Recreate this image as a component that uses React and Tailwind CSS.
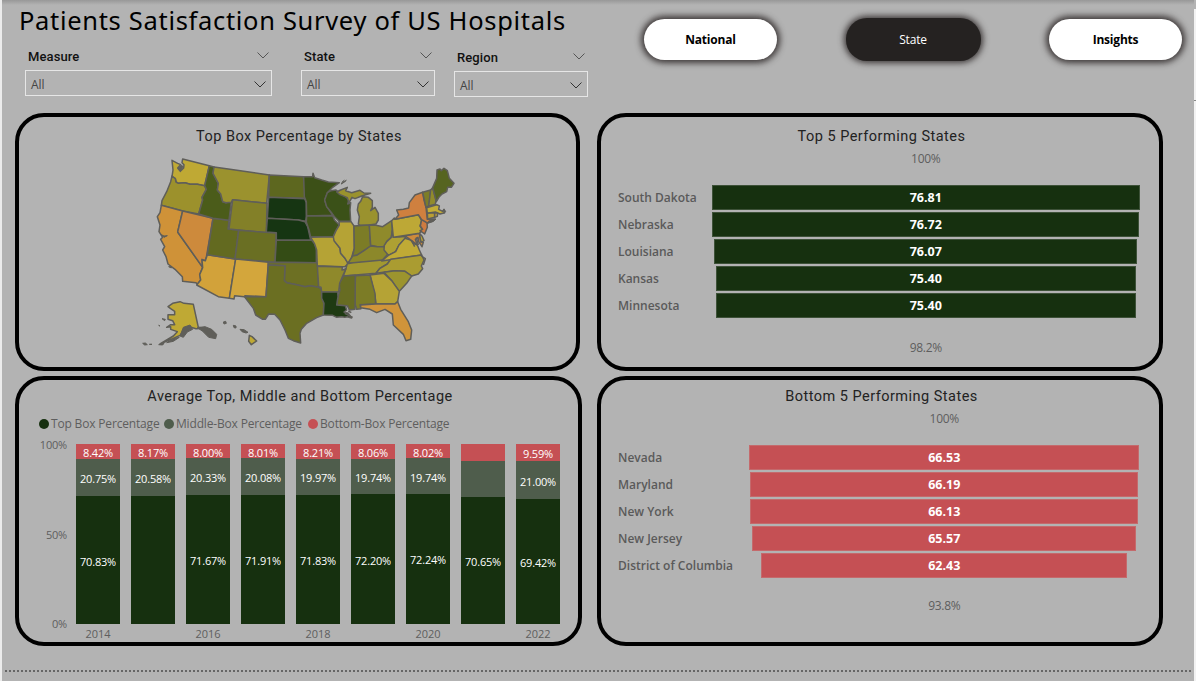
import React from "react";

const STATES = [
  ["WA", "#bfa934", "128,27 208,47 194,107 172,103 150,103 135,98 115,100 108,96 106,86 96,80 99,60 96,31 113,40 122,44 113,54 121,64 131,54 132,44 126,38"],
  ["OR", "#9c912c", "96,78 106,86 108,96 115,100 135,98 150,103 172,103 194,107 199,118 186,142 188,150 176,192 128,183 64,166 66,152 80,125 92,95"],
  ["CA", "#cf9238", "64,166 128,183 113,246 188,352 180,372 182,390 172,403 168,398 128,394 127,380 105,358 84,342 78,320 68,300 74,290 62,268 68,262 57,245 60,225 52,200 60,188"],
  ["NV", "#cd8a3c", "128,183 219,205 199,322 196,332 186,328 188,352 113,246"],
  ["AZ", "#d2a23a", "202,314 287,327 268,445 235,440 170,405 182,390 179,374 188,353 186,330 196,332"],
  ["UT", "#636a20", "219,205 267,211 264,237 296,241 285,327 202,314"],
  ["ID", "#4b5c1a", "208,47 222,51 219,70 235,100 232,120 242,132 248,155 258,158 274,153 267,211 219,205 176,192 188,150 186,142 199,118 194,107"],
  ["MT", "#9b922e", "222,51 270,58 388,75 380,160 278,149 274,157 258,158 248,155 242,132 232,120 235,100 219,70"],
  ["WY", "#838028", "278,149 381,160 379,248 267,237"],
  ["CO", "#6a6f23", "296,241 409,249 405,337 285,327"],
  ["NM", "#d3a63c", "287,327 385,337 378,440 315,437 313,440 284,437 282,447 268,445"],
  ["ND", "#5d671f", "388,75 490,80 493,105 497,145 386,142"],
  ["SD", "#163512", "386,142 494,146 499,158 499,200 497,214 475,210 382,205"],
  ["NE", "#163512", "382,205 475,210 495,215 503,230 512,270 409,271 409,248 379,246"],
  ["KS", "#344c15", "409,271 515,271 523,280 529,295 529,338 405,337"],
  ["OK", "#6d7023", "385,337 532,338 534,360 536,412 510,407 495,410 470,404 440,398 433,392 435,347 385,345"],
  ["TX", "#6b6f22", "385,345 435,347 433,392 440,398 470,404 495,410 510,407 536,412 545,418 545,440 552,460 550,495 530,503 500,520 484,538 480,550 482,579 460,572 445,565 435,540 420,510 404,493 386,492 376,508 368,508 347,495 340,475 313,440 378,440"],
  ["MN", "#3c5017", "491,80 518,80 519,70 524,83 545,90 565,96 598,98 578,112 562,128 554,150 560,168 578,196 500,198 499,155 493,140"],
  ["WI", "#3b5118", "562,128 573,122 588,120 600,130 615,138 627,150 623,162 632,158 630,180 632,214 597,214 585,202 576,190 560,170 554,150"],
  ["MI-UP", "#9a922e", "590,126 602,120 622,112 617,122 635,128 660,121 672,129 692,130 665,138 645,146 636,142 627,158 622,143 600,134"],
  ["MI", "#9a922e", "668,140 685,142 697,152 697,172 692,182 705,172 715,190 715,210 708,222 688,225 660,226 655,222 658,200 652,180 655,162 662,154"],
  ["IA", "#3f5319", "500,198 578,197 584,211 598,225 588,242 580,260 512,261 507,240 499,216"],
  ["MO", "#b5a335", "512,262 580,260 586,275 600,295 602,310 615,325 625,341 615,350 607,350 532,347 530,300 523,280"],
  ["IL", "#b5a335", "597,215 633,215 642,228 643,295 634,325 624,340 615,325 602,310 600,295 582,272 580,260 588,242 598,225"],
  ["IN", "#7c7c26", "642,228 688,225 692,288 672,302 650,316 638,318 643,295"],
  ["OH", "#8f8a2b", "688,225 708,226 728,230 755,212 757,240 754,262 740,275 732,290 712,290 692,286"],
  ["KY", "#8c882a", "625,338 638,318 650,316 672,302 692,288 712,290 732,290 744,312 725,332 640,340"],
  ["TN", "#a29830", "622,341 640,338 752,328 742,342 720,355 708,370 610,378 618,355"],
  ["WV", "#aea033", "757,240 760,262 777,260 797,259 795,268 777,285 767,305 745,316 732,300 733,286 741,274 754,262"],
  ["VA", "#c0aa35", "795,265 812,270 820,280 832,285 838,300 845,315 725,333 745,316 767,305 777,285"],
  ["MD", "#cd8a3c", "777,260 838,250 843,276 850,277 846,290 836,275 834,262 826,268 832,285 815,272 797,259"],
  ["DE", "#bfa934", "838,250 846,258 852,272 843,276"],
  ["PA", "#bda836", "755,212 763,204 765,208 835,194 845,212 840,228 848,240 838,250 760,262"],
  ["NJ", "#ce7b40", "845,209 861,215 862,232 854,252 840,242 848,238 841,228"],
  ["NY", "#cf803f", "848,127 852,150 858,172 862,208 885,207 878,214 862,219 845,209 835,194 765,208 776,195 770,180 790,178 806,174 808,158 825,135"],
  ["VT", "#7c7d28", "848,127 872,120 870,140 866,168 858,172"],
  ["NH", "#918b2c", "872,120 878,113 888,150 886,163 866,168"],
  ["ME", "#566420", "878,113 890,85 891,60 900,57 904,62 912,55 922,62 928,85 942,100 934,112 923,112 920,125 906,132 898,140 889,155"],
  ["MA", "#c3ad36", "860,173 890,164 898,168 896,178 908,184 912,178 914,188 900,192 886,186 862,190"],
  ["CT", "#ba9f35", "862,190 884,188 884,202 863,207"],
  ["RI", "#ba9f35", "884,188 893,190 892,199 884,202"],
  ["NC", "#aa9c31", "752,328 845,315 852,330 844,348 848,356 835,372 815,378 795,364 765,362 735,366 708,370 720,355 742,342"],
  ["SC", "#9c942e", "732,367 765,362 795,364 815,378 800,400 778,424 755,392"],
  ["GA", "#b5a335", "690,375 732,370 755,392 778,424 773,455 765,462 708,462 705,440"],
  ["AL", "#7c7c26", "646,377 690,375 705,430 707,462 660,464 663,476 650,478 645,462"],
  ["MS", "#676c22", "611,378 646,376 645,478 628,480 622,467 590,466 594,440 600,420 597,400"],
  ["AR", "#8f892b", "532,349 607,351 606,360 618,356 608,378 599,400 596,426 545,426 543,412 536,410"],
  ["LA", "#1e3a12", "545,426 593,426 594,440 590,465 616,467 620,480 612,486 625,490 635,504 622,500 614,502 605,500 590,502 578,496 550,495 552,460 545,445"],
  ["FL", "#d0943a", "662,465 707,462 765,462 773,455 782,478 805,515 815,540 812,568 798,572 790,553 760,525 757,492 735,478 710,488 690,478 662,473"],
  ["AK", "#bfa934", "84,470 98,460 120,455 132,460 160,463 175,532 190,535 168,536 148,530 132,540 120,556 98,566 60,582 100,558 112,545 92,538 92,530 80,532 92,524 104,524 98,512 84,508 84,494 104,494 104,484 92,476"],
  ["HI", "#bfa934", "328,556 336,560 350,573 334,584 326,574"],
];

const ISLANDS = [
  "172,533 195,530 215,538 230,553 227,566 206,562 188,544",
  "130,532 150,525 158,538 142,546 130,562 120,558",
  "80,578 100,566 118,562 100,574", "66,506 76,508 74,512", "56,526 60,528", "8,580 16,579 22,584 14,585", "28,583 36,583", "56,584 72,580 68,585",
  "250,516 257,514 259,520 252,522", "280,526 288,528 288,534 282,533", "300,538 312,539 324,547 318,549 306,545",
  "86,350 94,350 94,354", "603,102 612,97 619,91", "605,98 613,91",
  "64,254 72,258 82,257 72,262", "866,213 888,207 880,214 862,220", "912,178 917,184 912,190", "115,54 121,62 129,52 126,46",
];

function Chevron({ className }) {
  return (
    <svg viewBox="0 0 12 7" className={className} fill="none" stroke="currentColor" strokeWidth="1">
      <path d="M0.5 0.5 6 6 11.5 0.5" />
    </svg>
  );
}

function Slicer({ label, className }) {
  return (
    <div className={`flex flex-col ${className}`}>
      <div className="flex h-[22px] items-start justify-between pl-[3px] pr-[3px]">
        <span className="font-[Roboto,sans-serif] text-[13px] leading-[17px] font-medium tracking-[0.1px] text-[#111]">{label}</span>
        <Chevron className="mt-[4px] h-[7px] w-[12px] text-[#555]" />
      </div>
      <div className="flex h-[26px] items-center justify-between border border-[#e6e6e6] pr-[5px] pl-[5px]">
        <span className="pt-[3px] text-[12px] leading-none text-[#444]">All</span>
        <Chevron className="mt-[3px] h-[7px] w-[12px] text-[#333]" />
      </div>
    </div>
  );
}

function NavButton({ label, active }) {
  return (
    <button
      className={
        active
          ? "mt-[-1px] h-[43px] w-[135px] rounded-[21px] bg-[#252221] pt-px text-[12px] tracking-[-0.2px] text-white shadow-[0_0_6px_2px_rgba(40,34,34,0.85)]"
          : "h-[41px] w-[133px] rounded-[21px] bg-white pt-px text-[12px] font-bold tracking-[-0.2px] text-black shadow-[0_0_6px_3px_rgba(40,34,34,0.85)]"
      }
    >
      {label}
    </button>
  );
}

function Panel({ title, className, children }) {
  return (
    <section className={`flex flex-col rounded-[29px] border-4 border-black ${className}`}>
      <h2 className="pl-[3px] text-center font-[Roboto,sans-serif] text-[14.5px] leading-[17px] tracking-[0.48px] text-[#222]">{title}</h2>
      {children}
    </section>
  );
}

function UsMap() {
  return (
    <svg viewBox="0 0 960 600" className="ml-[121px] mt-[5px] h-[200px] w-[320px]" stroke="#5f5e59" strokeWidth="4.5" strokeLinejoin="round">
      {STATES.map(([id, fill, points]) => (
        <polygon key={id} points={points} fill={fill} />
      ))}
      <g fill="#5f5e59" strokeWidth="3">
        {ISLANDS.map((points) => (
          <polygon key={points} points={points} />
        ))}
      </g>
      <path d="M815 272 824 290M829 262 835 285M844 318 856 326 850 345M614 490 638 502M625 483 634 488" fill="none" />
    </svg>
  );
}

// The last entry is a bit mask of the segments that carry a data label.
const YEARS = [
  [2014, 8.42, 20.75, 70.83, 7],
  [2015, 8.17, 20.58, 71.25, 6],
  [2016, 8.0, 20.33, 71.67, 7],
  [2017, 8.01, 20.08, 71.91, 7],
  [2018, 8.21, 19.97, 71.83, 7],
  [2019, 8.06, 19.74, 72.2, 7],
  [2020, 8.02, 19.74, 72.24, 7],
  [2021, 9.3, 20.05, 70.65, 1],
  [2022, 9.59, 21.0, 69.42, 7],
];

function Segment({ value, shown, className }) {
  return (
    <div className={`flex min-h-0 items-center justify-center ${className}`} style={{ height: `${value}%` }}>
      {shown ? <span className="pt-[2px] text-[11px] leading-none tracking-[-0.2px] text-white">{value.toFixed(2)}%</span> : null}
    </div>
  );
}

function StackedChart() {
  return (
    <>
      <div className="mt-[10px] flex h-[17px] items-center pl-[20px] text-[12px] tracking-[-0.17px] text-[#5e5e5e]">
        <i className="mr-[2px] h-[10px] w-[10px] rounded-full bg-[#16300f]" />
        <span className="w-[113px] whitespace-nowrap">Top Box Percentage</span>
        <i className="mr-[2px] h-[10px] w-[10px] rounded-full bg-[#4f5d4c]" />
        <span className="w-[132px] whitespace-nowrap">Middle-Box Percentage</span>
        <i className="mr-[2px] h-[10px] w-[10px] rounded-full bg-[#c55054]" />
        <span className="whitespace-nowrap">Bottom-Box Percentage</span>
      </div>
      <div className="mt-[12px] flex">
        <div className="mt-[-6px] flex h-[193px] w-[48px] flex-col items-end justify-between text-[11px] leading-[14px] tracking-[-0.2px] text-[#5e5e5e]">
          <span>100%</span>
          <span>50%</span>
          <span>0%</span>
        </div>
        <div className="ml-[9px] flex gap-[11px]">
          {YEARS.map(([year, bottom, middle, top, mask]) => (
            <div key={year} className="flex w-[44px] flex-col">
              <div className="flex h-[180px] flex-col">
                <Segment value={bottom} shown={mask & 4} className="bg-[#c55054]" />
                <Segment value={middle} shown={mask & 2} className="bg-[#4f5d4c]" />
                <Segment value={top} shown={mask & 1} className="bg-[#16300f]" />
              </div>
              {year % 2 === 0 ? <span className="mt-[3px] text-center text-[11px] leading-[14px] text-[#5e5e5e]">{year}</span> : null}
            </div>
          ))}
        </div>
      </div>
    </>
  );
}

function Funnel({ rows, labelWidth, barArea, barClass, textClass, topLabel, bottomLabel, bottomGap }) {
  return (
    <div className="flex flex-col pl-[17px]">
      <div className="mt-[6px] flex h-[16px]">
        <div style={{ width: labelWidth }} />
        <div className="text-center text-[12px] leading-[16px] tracking-[-0.3px] text-[#5e5e5e]" style={{ width: barArea }}>{topLabel}</div>
      </div>
      <div className="mt-[18px] flex flex-col gap-[2px]">
        {rows.map(([name, value, width]) => (
          <div key={name} className="flex h-[25px] items-center">
            <div className="whitespace-nowrap text-[12px] font-semibold text-[#5a5a5a]" style={{ width: labelWidth }}>{name}</div>
            <div className="flex justify-center" style={{ width: barArea }}>
              <div className={`flex h-[25px] items-center justify-center border text-[12.5px] font-bold text-white ${barClass}`} style={{ width }}>
                <span className={textClass}>{value.toFixed(2)}</span>
              </div>
            </div>
          </div>
        ))}
      </div>
      <div className="flex h-[16px]" style={{ marginTop: bottomGap }}>
        <div style={{ width: labelWidth }} />
        <div className="text-center text-[12px] leading-[16px] tracking-[-0.3px] text-[#5e5e5e]" style={{ width: barArea }}>{bottomLabel}</div>
      </div>
    </div>
  );
}

const TOP_FIVE = [
  ["South Dakota", 76.81, 428],
  ["Nebraska", 76.72, 427],
  ["Louisiana", 76.07, 423],
  ["Kansas", 75.4, 420],
  ["Minnesota", 75.4, 420],
];

const BOTTOM_FIVE = [
  ["Nevada", 66.53, 390],
  ["Maryland", 66.19, 388],
  ["New York", 66.13, 388],
  ["New Jersey", 65.57, 384],
  ["District of Columbia", 62.43, 366],
];

export default function App() {
  return (
    <div className="flex h-[681px] w-[1196px] overflow-hidden bg-[#b3b3b3] font-['Open_Sans','Noto_Sans',sans-serif]">
      <div className="w-[2px] shrink-0 bg-[#ececec]" />
      <div className="flex w-[1192px] shrink-0 flex-col">
        <div className="h-[5px] shrink-0 bg-linear-to-b from-[#989898] to-[#b3b3b3]" />
        <header className="flex h-[108px] shrink-0">
          <div className="flex w-[640px] flex-col">
            <h1 className="ml-[17px] h-[32px] whitespace-nowrap font-['Noto_Sans',sans-serif] text-[25.5px] leading-[30px] tracking-[0.68px] text-black">
              Patients Satisfaction Survey of US Hospitals
            </h1>
            <div className="mt-[11px] flex pl-[23px]">
              <Slicer label="Measure" className="w-[247px]" />
              <Slicer label="State" className="ml-[29px] w-[134px]" />
              <Slicer label="Region" className="ml-[19px] mt-[1px] w-[134px]" />
            </div>
          </div>
          <nav className="mt-[14px] ml-[2px] flex h-[43px] w-[538px] items-start justify-between">
            <NavButton label="National" />
            <NavButton label="State" active />
            <NavButton label="Insights" />
          </nav>
        </header>
        <main className="flex flex-col gap-[5px] pl-[13px]">
          <div className="flex h-[258px] gap-[17px]">
            <Panel title="Top Box Percentage by States" className="w-[565px] pt-[11px]">
              <UsMap />
            </Panel>
            <Panel title="Top 5 Performing States" className="w-[566px] pt-[11px]">
              <Funnel rows={TOP_FIVE} labelWidth={94} barArea={427.5} barClass="bg-[#16300f] border-[#3d5138]" textClass="pt-[2px]" topLabel="100%" bottomLabel="98.2%" bottomGap={22} />
            </Panel>
          </div>
          <div className="flex h-[270px] gap-[15px]">
            <Panel title="Average Top, Middle and Bottom Percentage" className="w-[567px] pt-[8px]">
              <StackedChart />
            </Panel>
            <Panel title="Bottom 5 Performing States" className="w-[566px] pt-[8px]">
              <Funnel rows={BOTTOM_FIVE} labelWidth={131} barArea={390.5} barClass="bg-[#c55054] border-[#c46a6c]" textClass="pt-px" topLabel="100%" bottomLabel="93.8%" bottomGap={20} />
            </Panel>
          </div>
        </main>
        <div className="mx-[3px] mt-[24px] border-t-2 border-dotted border-[#666]" />
      </div>
      <div className="flex w-[2px] shrink-0 flex-col bg-[#f2f2f2]">
        <div className="h-[9px] bg-[#b3b3b3]" />
        <div className="mt-[91px] h-px bg-[#888]" />
      </div>
    </div>
  );
}
